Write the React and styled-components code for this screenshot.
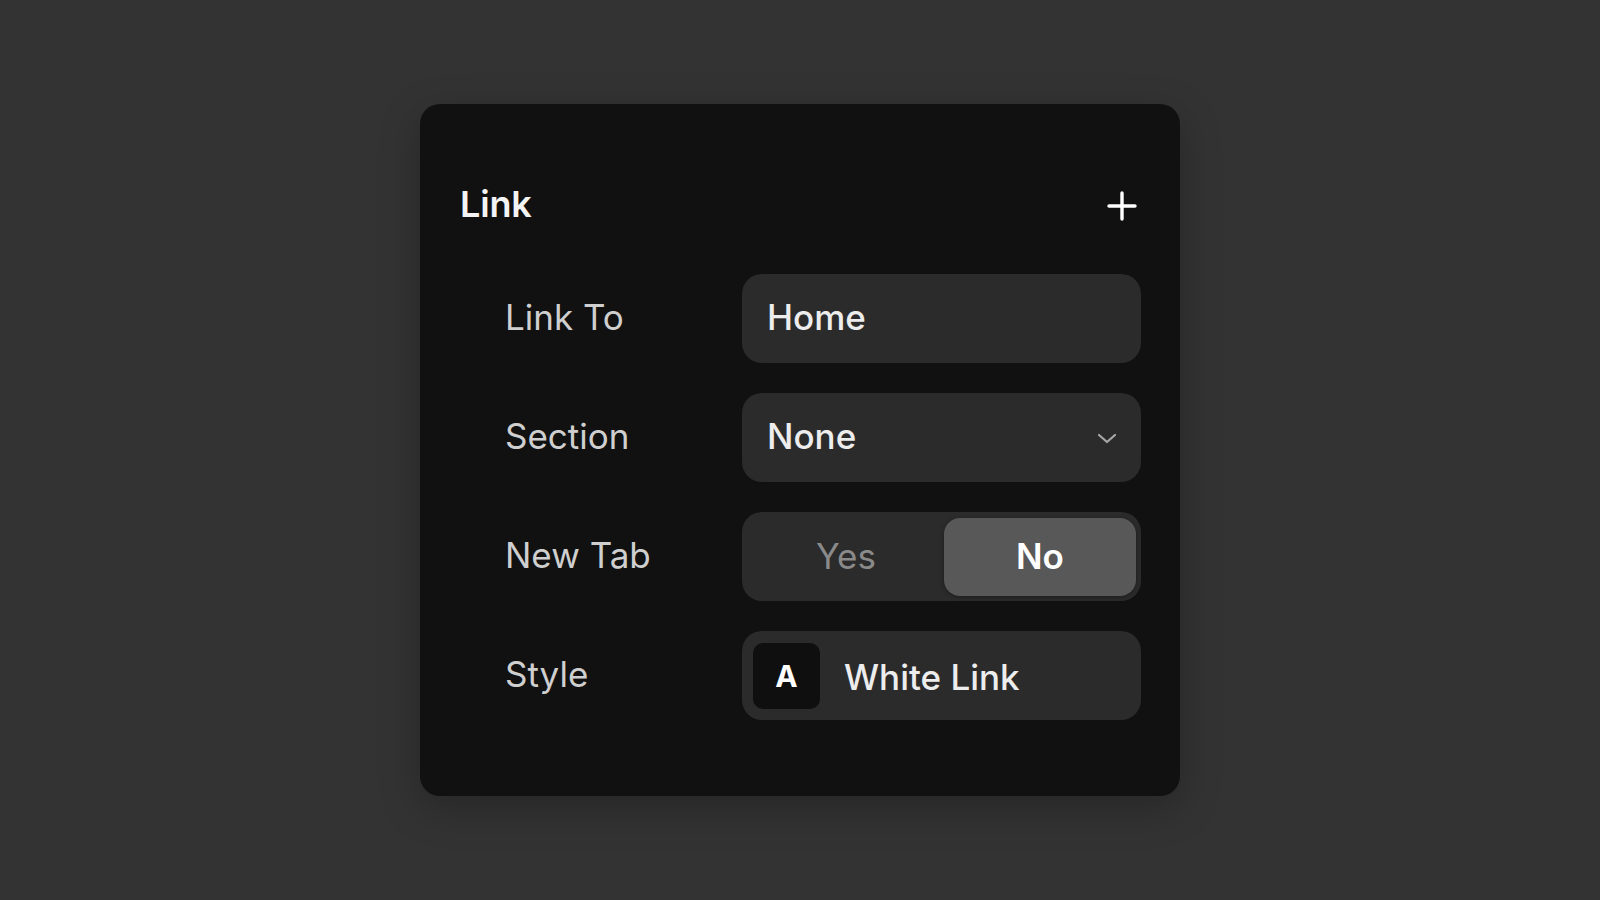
import React from "react";
import styled, { createGlobalStyle } from "styled-components";

const Global = createGlobalStyle`
  html, body { margin: 0; padding: 0; }
  body {
    background: #333333;
    font-family: Inter, "Noto Sans", "Liberation Sans", sans-serif;
    -webkit-font-smoothing: antialiased;
  }
`;

const Stage = styled.div`
  min-height: 100vh;
  display: flex;
  align-items: center;
  justify-content: center;
`;

const Panel = styled.div`
  width: 760px;
  box-sizing: border-box;
  padding: 64px 39px 76px 40px;
  background: #111111;
  border-radius: 20px;
  box-shadow: 0 12px 40px rgba(0, 0, 0, 0.25);
  display: flex;
  flex-direction: column;
  gap: 30px;
`;

const Header = styled.div`
  height: 76px;
  display: flex;
  align-items: center;
  justify-content: space-between;
`;

const Title = styled.h2`
  margin: 0;
  padding-bottom: 4px;
  font-size: 36px;
  font-weight: 600;
  color: #f4f4f4;
  letter-spacing: -0.2px;
`;

const AddButton = styled.button`
  border: 0;
  background: none;
  padding: 0;
  margin-right: 4px;
  width: 30px;
  height: 30px;
  display: flex;
  align-items: center;
  justify-content: center;
  color: #ffffff;
  cursor: pointer;
`;

const Rows = styled.div`
  display: flex;
  flex-direction: column;
  gap: 30px;
`;

const Row = styled.div`
  display: grid;
  grid-template-columns: 282px 399px;
  align-items: center;
  height: 89px;
`;

const Label = styled.span`
  padding-left: 45px;
  padding-bottom: 4px;
  font-size: 35px;
  font-weight: 400;
  color: #cfcfcf;
`;

const Field = styled.div`
  height: 89px;
  box-sizing: border-box;
  background: #2b2b2b;
  border-radius: 20px;
  display: flex;
  align-items: center;
  justify-content: space-between;
  padding: 0 23px 0 25px;
  font-size: 35px;
  font-weight: 500;
  color: #ededed;
`;

const FieldText = styled.span`
  padding-bottom: 4px;
`;

const Segmented = styled.div`
  height: 89px;
  box-sizing: border-box;
  background: #2b2b2b;
  border-radius: 20px;
  padding: 6px 5px 5px 6px;
  display: grid;
  grid-template-columns: 196px 1fr;
`;

const Segment = styled.div`
  display: flex;
  align-items: center;
  justify-content: center;
  padding-bottom: 3px;
  border-radius: 16px;
  font-size: 35px;
  font-weight: ${(p) => (p.$active ? 600 : 400)};
  color: ${(p) => (p.$active ? "#ffffff" : "#8a8a8a")};
  background: ${(p) => (p.$active ? "#585858" : "transparent")};
  box-shadow: ${(p) => (p.$active ? "0 1px 4px rgba(0,0,0,0.35)" : "none")};
`;

const StyleField = styled.div`
  height: 89px;
  box-sizing: border-box;
  background: #2b2b2b;
  border-radius: 20px;
  padding: 11px;
  display: flex;
  align-items: center;
  gap: 24px;
`;

const Swatch = styled.div`
  width: 67px;
  height: 66px;
  border-radius: 10px;
  background: #0f0f0f;
  display: flex;
  align-items: center;
  justify-content: center;
  font-size: 30px;
  font-weight: 700;
  color: #ffffff;
`;

const StyleName = styled.span`
  font-size: 35px;
  font-weight: 500;
  color: #ededed;
  padding-top: 3px;
`;

const Plus = () => (
  <svg width="30" height="30" viewBox="0 0 30 30" fill="none">
    <path d="M15 2v26M2 15h26" stroke="currentColor" strokeWidth="3.4" strokeLinecap="round" />
  </svg>
);

const Chevron = () => (
  <svg width="22" height="14" viewBox="0 0 22 14" fill="none">
    <path d="M3 4l8 7 8-7" stroke="#a8a8a8" strokeWidth="2.2" strokeLinecap="round" strokeLinejoin="round" />
  </svg>
);

export default function App() {
  return (
    <>
      <Global />
      <Stage>
        <Panel>
          <Header>
            <Title>Link</Title>
            <AddButton aria-label="Add">
              <Plus />
            </AddButton>
          </Header>
          <Rows>
            <Row>
              <Label>Link To</Label>
              <Field>
                <FieldText>Home</FieldText>
              </Field>
            </Row>
            <Row>
              <Label>Section</Label>
              <Field>
                <FieldText>None</FieldText>
                <Chevron />
              </Field>
            </Row>
            <Row>
              <Label>New Tab</Label>
              <Segmented>
                <Segment>Yes</Segment>
                <Segment $active>No</Segment>
              </Segmented>
            </Row>
            <Row>
              <Label>Style</Label>
              <StyleField>
                <Swatch>A</Swatch>
                <StyleName>White Link</StyleName>
              </StyleField>
            </Row>
          </Rows>
        </Panel>
      </Stage>
    </>
  );
}
